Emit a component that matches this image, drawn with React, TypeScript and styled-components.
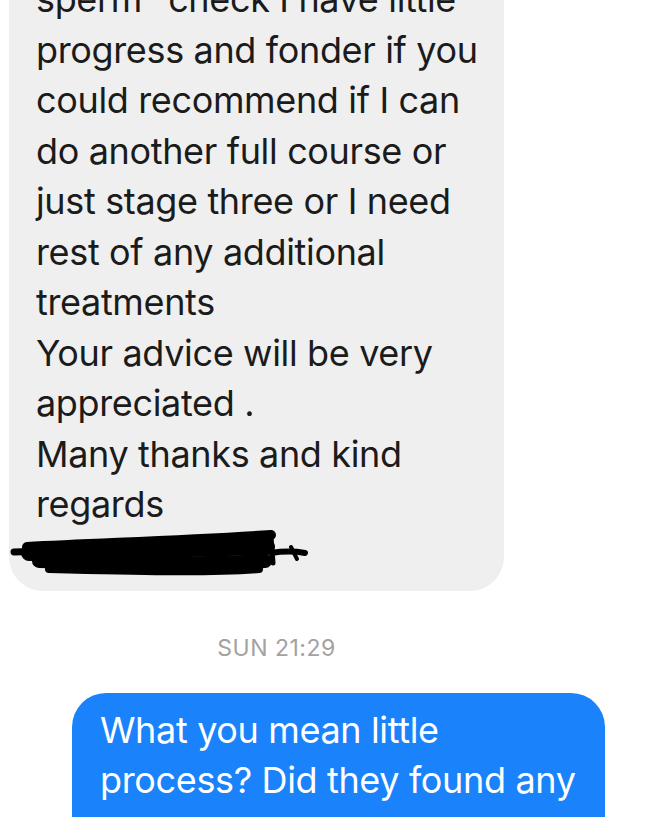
import React from "react";
import styled, { createGlobalStyle } from "styled-components";

const Global = createGlobalStyle`
  html, body { margin: 0; padding: 0; background: #ffffff; overflow: hidden; }
  body { font-family: Inter, "Noto Sans", "Liberation Sans", sans-serif; }
`;

const Screen = styled.div`
  width: 653px;
  height: 817px;
  overflow: hidden;
  display: flex;
  flex-direction: column;
  background: #ffffff;
`;

const Bubble = styled.div<{ $out?: boolean }>`
  box-sizing: border-box;
  border-radius: 34px;
  font-size: 36px;
  line-height: 50.5px;
  letter-spacing: -0.35px;
  white-space: pre-line;
  background: ${(p) => (p.$out ? "#1a82fb" : "#efefef")};
  color: ${(p) => (p.$out ? "#ffffff" : "#1b1b1b")};
`;

const Incoming = styled(Bubble)`
  width: 495px;
  margin: -36px 0 0 9px;
  padding: 10px 20px 14px 27px;
`;

const Outgoing = styled(Bubble)`
  width: 533px;
  align-self: flex-end;
  margin: 0 48px 0 0;
  padding: 12px 20px 20px 28px;
`;

const Redaction = styled.svg`
  display: block;
  width: 300px;
  height: 56px;
  margin: -9px 0 0 -27px;
`;

const Stamp = styled.div`
  padding: 44px 100px 32px 0;
  text-align: center;
  font-size: 23px;
  line-height: 26px;
  letter-spacing: 0.5px;
  color: #a2a2a2;
`;

const incomingText = `sperm" check I have little
progress and fonder if you
could recommend if I can
do another full course or
just stage three or I need
rest of any additional
treatments
Your advice will be very
appreciated .
Many thanks and kind
regards`;

const outgoingText = `What you mean little
process? Did they found any
sperm?`;

export default function App() {
  return (
    <Screen>
      <Global />
      <Incoming>
        {incomingText}
        <Redaction viewBox="0 0 300 56">
          <g fill="none" stroke="#000" strokeLinecap="round" strokeLinejoin="round">
            <path d="M5 31 L70 29" strokeWidth="7" />
            <path d="M18 26 C90 22 170 20 262 14" strokeWidth="10" />
            <path d="M20 32 C100 30 180 28 258 26" strokeWidth="16" />
            <path d="M30 40 C110 42 190 44 256 40" strokeWidth="14" />
            <path d="M40 48 C120 50 200 52 250 48" strokeWidth="8" />
            <path d="M262 16 L264 42" strokeWidth="5" />
            <path d="M262 32 C275 30 285 30 296 32" strokeWidth="6" />
            <path d="M282 26 L288 38" strokeWidth="4" />
          </g>
        </Redaction>
      </Incoming>
      <Stamp>SUN 21:29</Stamp>
      <Outgoing $out>{outgoingText}</Outgoing>
    </Screen>
  );
}
